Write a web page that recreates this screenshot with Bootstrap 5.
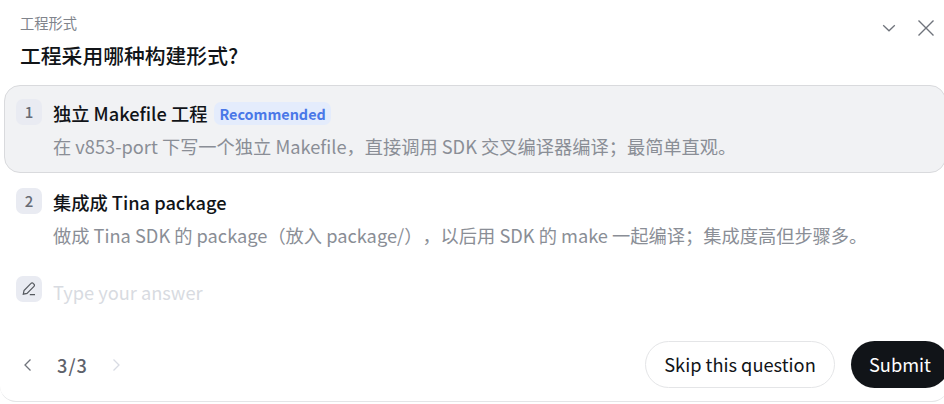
<!DOCTYPE html>
<html lang="zh">
<head>
<meta charset="utf-8">
<title>工程形式</title>
<link rel="stylesheet" href="https://cdn.jsdelivr.net/npm/bootstrap@5.3.0/dist/css/bootstrap.min.css">
<style>
html,body{margin:0;height:404px;overflow:hidden;background:#fff}
body{font-family:"Noto Sans CJK SC","Noto Sans",sans-serif}
.qpanel{width:948px;height:402px;border-bottom:1px solid #e4e5e7;border-radius:0 0 16px 16px;padding:13px 0 0 4px;overflow:hidden}
.qhead{height:72px;padding-left:16px;padding-right:12px}
.qeyebrow{font-size:14.25px;line-height:20px;color:#80848c}
.qtitle{font-size:20.8px;line-height:28px;font-weight:500;color:#111418;margin-top:8px}
.qicons{gap:20px;padding-top:6px;margin-right:1px}
.qopt{padding:13px 12px 13px 11px;gap:11px;border:1px solid transparent;border-radius:16px;width:942px}
.qopt-on{background:#f1f2f4;border-color:#d9dadd;height:88px}
.qopt-two{height:88px;padding-top:14px;margin-top:0}
.qnum{flex:0 0 26px;width:26px;height:26px;border-radius:7px;background:#e9ebf2;color:#676b75;font-size:15px;font-weight:500;line-height:26px;text-align:center}
.qname{font-size:18.24px;line-height:28px;font-weight:500;color:#111418;gap:7px}
.qtag{font-size:14.4px;line-height:23px;font-weight:600;color:#4a78e8;background:#e4ecfc;border-radius:7px;padding:0 5px;height:23px}
.qdesc{font-size:18.24px;line-height:26px;color:#8a8e96;margin-top:6px;white-space:nowrap;text-spacing-trim:space-all;font-feature-settings:"chws" 0}
.qedit{padding:0 12px;gap:11px;height:32px;margin-top:12px}
.qtype{font-size:18.24px;line-height:32px;color:#d8dbe1;padding-top:6px}
.qfoot{padding-left:16px;margin-top:36px;height:47px}
.qpage{font-size:18.24px;line-height:26px;font-weight:500;color:#5e626b;letter-spacing:1px;margin:0 20px 0 21px}
.qskip{height:47px;width:190px;border:1px solid #e4e5e7;border-radius:24px;background:#fff;color:#111418;font-size:18.24px;padding:0;margin-right:16px}
.qsend{height:47px;width:98px;border:0;border-radius:24px;background:#111418;color:#fff;font-size:18.24px;padding:0;margin-right:-1px}
.qsend:hover,.qskip:hover{background:inherit}
</style>
</head>
<body>
<div class="qpanel">
  <div class="qhead d-flex justify-content-between align-items-start">
    <div>
      <div class="qeyebrow">工程形式</div>
      <div class="qtitle">工程采用哪种构建形式?</div>
    </div>
    <div class="qicons d-flex align-items-center">
      <svg width="16" height="16" viewBox="0 0 16 16" fill="none" stroke="#6f737b" stroke-width="1.3"><path d="M2.200 5.200 8 10.800 13.800 5.200"/></svg>
      <svg width="18" height="18" viewBox="0 0 18 18" fill="none" stroke="#6f737b" stroke-width="1.4"><path d="M1.500 1.500 16.500 16.500M16.500 1.500 1.500 16.500"/></svg>
    </div>
  </div>
  <div class="qopt qopt-on d-flex">
    <div class="qnum">1</div>
    <div>
      <div class="qname d-flex align-items-center">独立 Makefile 工程 <span class="qtag">Recommended</span></div>
      <div class="qdesc">在 v853-port 下写一个独立 Makefile&#xFF0C;直接调用 SDK 交叉编译器编译&#xFF1B;最简单直观。</div>
    </div>
  </div>
  <div class="qopt qopt-two d-flex">
    <div class="qnum">2</div>
    <div>
      <div class="qname">集成成 Tina package</div>
      <div class="qdesc">做成 Tina SDK 的 package&#xFF08;放入 package/&#xFF09;&#xFF0C;以后用 SDK 的 make 一起编译&#xFF1B;集成度高但步骤多。</div>
    </div>
  </div>
  <div class="qedit d-flex align-items-center">
    <div class="qnum d-flex align-items-center justify-content-center">
      <svg width="16" height="16" viewBox="0 0 16 16" fill="none" stroke="#55595f" stroke-width="1.2"><path d="M2.300 13.200 3 9.600 10 2.400a1.500 1.500 0 0 1 2.200 0l.8.8a1.500 1.500 0 0 1 0 2.200L6 12.400ZM8.800 13.600H14"/></svg>
    </div>
    <div class="qtype">Type your answer</div>
  </div>
  <div class="qfoot d-flex align-items-center">
    <svg width="16" height="16" viewBox="0 0 16 16" fill="none" stroke="#6f737b" stroke-width="1.3"><path d="M10.500 2.500 5 8l5.500 5.500"/></svg>
    <span class="qpage">3/3</span>
    <svg width="16" height="16" viewBox="0 0 16 16" fill="none" stroke="#d8dbe3" stroke-width="1.3"><path d="M5.500 2.500 11 8l-5.500 5.500"/></svg>
    <div class="ms-auto d-flex">
      <button class="btn qskip" type="button">Skip this question</button>
      <button class="btn qsend" type="button">Submit</button>
    </div>
  </div>
</div>
<script src="https://cdn.jsdelivr.net/npm/bootstrap@5.3.0/dist/js/bootstrap.bundle.min.js"></script>
</body>
</html>
